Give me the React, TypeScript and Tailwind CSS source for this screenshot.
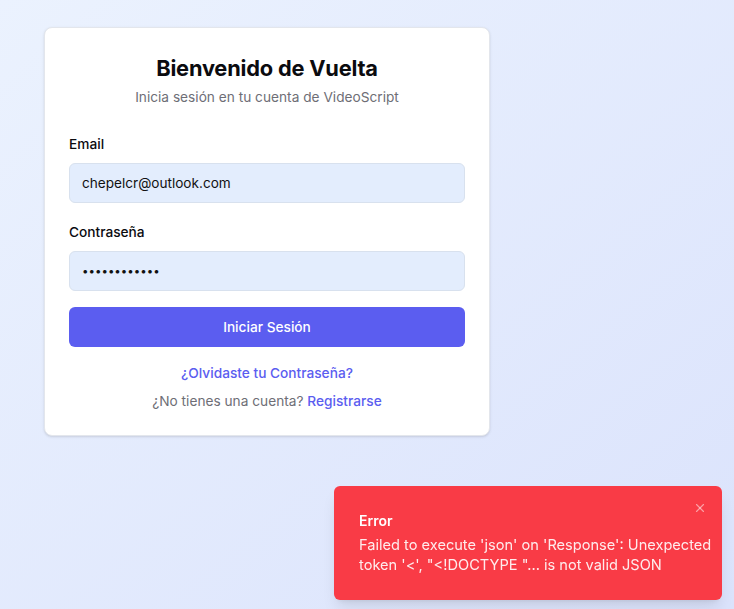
import React from "react";
import { X } from "lucide-react";

const Field = ({
  label,
  type,
  value,
  className,
  inputClass,
}: {
  label: string;
  type: string;
  value: string;
  className?: string;
  inputClass?: string;
}) => {
  return (
    <div className={className}>
      <label className="block text-[13.7px] leading-[20px] font-medium text-[#0b0b0f]">
        {label}
      </label>
      <input
        type={type}
        value={value}
        readOnly
        className={`mt-[9px] block h-[40px] w-full rounded-md border border-[#d8e1ee] bg-[#e3edfd] px-3 text-[#111] outline-none ${inputClass}`}
      />
    </div>
  );
};

const Toast = () => {
  return (
    <div className="fixed bottom-[9px] right-[12px] w-[388px] rounded-md bg-[#f93b46] pl-[25px] pr-[2px] pt-[25px] pb-[25px] shadow-lg">
      <button className="absolute right-[15px] top-[15px] text-white/50">
        <X className="h-[14px] w-[14px]" strokeWidth={2} />
      </button>
      <p className="text-[14px] leading-[20px] font-semibold text-white">
        Error
      </p>
      <p className="mt-[4px] text-[14.6px] leading-[20px] text-white/90">
        Failed to execute 'json' on 'Response': Unexpected token '&lt;', "&lt;!DOCTYPE "... is not valid JSON
      </p>
    </div>
  );
};

export default function App() {
  return (
    <div
      className="min-h-screen w-full bg-gradient-to-br from-[#ebf2fe] to-[#dbe3fc] pl-[44px] pt-[27px]"
      style={{ fontFamily: "Inter, 'Noto Sans', sans-serif" }}
    >
      <div className="w-[446px] rounded-lg border border-[#e3e6ec] bg-white px-6 pt-[26px] pb-[24px] shadow-sm">
        <div className="text-center">
          <h1 className="text-[21.8px] leading-[28px] font-bold tracking-[-0.2px] text-[#0b0b0f]">
            Bienvenido de Vuelta
          </h1>
          <p className="mt-[5px] text-[13.7px] leading-[20px] text-[#6e6e76]">
            Inicia sesión en tu cuenta de VideoScript
          </p>
        </div>

        <Field
          label="Email"
          type="email"
          value="chepelcr@outlook.com"
          className="mt-[27px]"
          inputClass="text-[13.6px]"
        />
        <Field
          label="Contraseña"
          type="password"
          value="************"
          className="mt-[19px]"
          inputClass="text-[11.5px]"
        />

        <button className="mt-[16px] h-[40px] w-full rounded-md bg-[#5b5df0] text-[13.7px] font-medium text-white">
          Iniciar Sesión
        </button>

        <div className="mt-[16px] text-center text-[13.7px] leading-[20px]">
          <a href="#" className="font-medium text-[#5b5df0]">
            ¿Olvidaste tu Contraseña?
          </a>
          <p className="mt-[8px] text-[#6e6e76]">
            ¿No tienes una cuenta?{" "}
            <a href="#" className="font-medium text-[#5b5df0]">
              Registrarse
            </a>
          </p>
        </div>
      </div>
      <Toast />
    </div>
  );
}
